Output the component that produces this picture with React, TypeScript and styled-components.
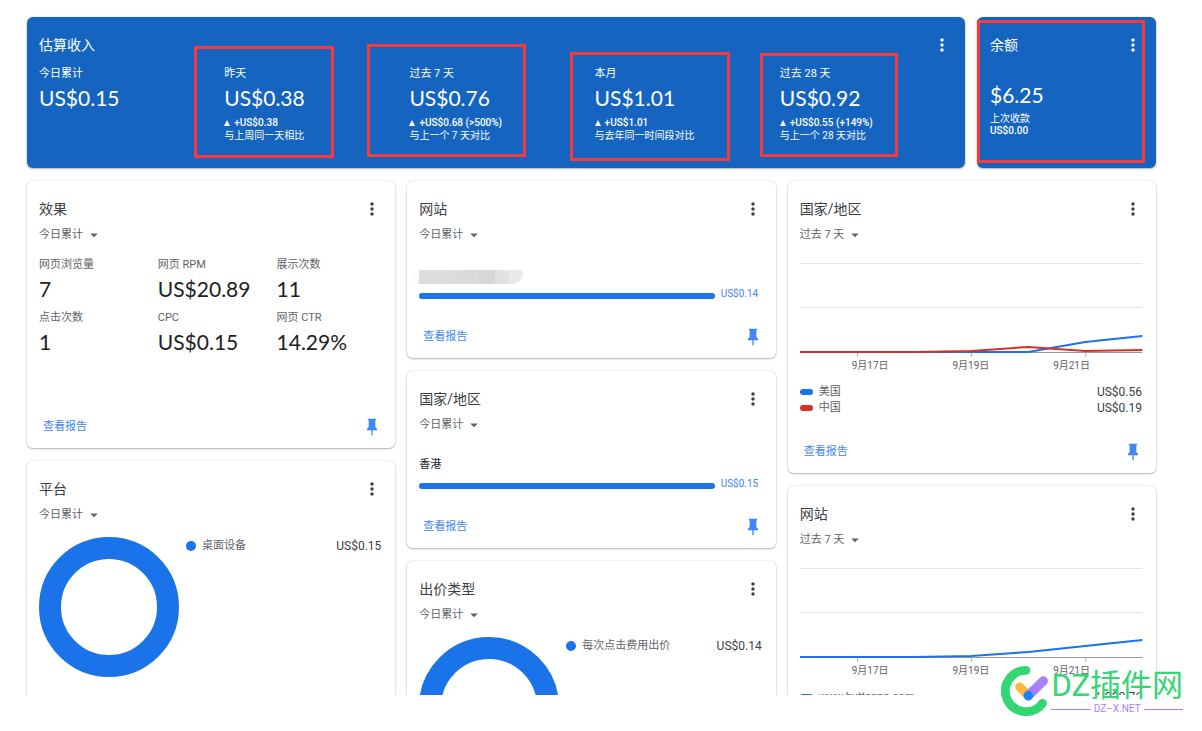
import React from "react";
import styled, { createGlobalStyle, css } from "styled-components";
import { MdMoreVert, MdArrowDropDown } from "react-icons/md";

const GlobalStyle = createGlobalStyle`
  *, *::before, *::after { box-sizing: border-box; }
  body {
    margin: 0;
    background: #fff;
    color: #202124;
    font-family: Roboto, "Noto Sans CJK SC", sans-serif;
    font-size: 11px;
    line-height: 16px;
  }
  h2, p, dl, dd, ul { margin: 0; padding: 0; }
  ul { list-style: none; }
  button, select { font: inherit; }
`;

const BLUE = "#1a73e8";
const RED = "#d93025";

const Page = styled.div`
  position: relative;
  height: 100vh;
  display: flex;
  flex-direction: column;
  padding-bottom: 36px;
`;

const Board = styled.main`
  flex: 1;
  min-height: 0;
  overflow: hidden;
  padding: 17px 46px 0 27px;
  display: flex;
  flex-direction: column;
  gap: 13px;
`;

const TopRow = styled.div`
  flex: none;
  display: flex;
  gap: 12px;
`;

const Columns = styled.div`
  flex: none;
  display: grid;
  grid-template-columns: repeat(3, minmax(0, 1fr));
  gap: 12px;
`;

const Column = styled.div`
  display: flex;
  flex-direction: column;
  gap: 13px;
`;

const Card = styled.section<{ $tone?: "blue" }>`
  position: relative;
  display: flex;
  flex-direction: column;
  padding: 18px 0 13px 12px;
  border-radius: 6px;
  background: #fff;
  box-shadow: 0 1px 2px rgba(60, 64, 67, 0.36), 0 0 2px rgba(60, 64, 67, 0.18);
  ${(p) =>
    p.$tone === "blue" &&
    css`
      background: #1565c0;
      color: #fff;
      padding-bottom: 26px;
    `}
`;

const Earnings = styled(Card)`
  flex: 1;
`;

const Balance = styled(Card)`
  flex: none;
  width: 179px;
  padding-left: 13px;
`;

const CardHead = styled.header`
  display: flex;
  align-items: center;
  justify-content: space-between;
  height: 20px;
  padding-right: 13px;
`;

const Title = styled.h2<{ $light?: boolean }>`
  font-size: 14px;
  line-height: 20px;
  font-weight: 400;
  color: ${(p) => (p.$light ? "#fff" : "#3c4043")};
`;

const IconButton = styled.button<{ $color: string }>`
  display: flex;
  padding: 0;
  border: 0;
  background: none;
  color: ${(p) => p.$color};
  cursor: pointer;
`;

const Stats = styled.div`
  display: grid;
  grid-template-columns: repeat(5, minmax(0, 1fr));
  margin-top: 11px;
`;

const Stat = styled.div`
  position: relative;
`;

const StatLabel = styled.p<{ $muted?: boolean }>`
  font-size: 11px;
  line-height: 16px;
  color: ${(p) => (p.$muted ? "#5f6368" : "inherit")};
`;

const Amount = styled.p<{ $tight?: boolean }>`
  margin: 4px 0 ${(p) => (p.$tight ? 5 : 7)}px;
  font-family: Lato, Roboto, sans-serif;
  font-size: 21px;
  line-height: 24px;
`;

const Trend = styled.p`
  display: flex;
  align-items: center;
  gap: 4px;
  font-size: 10px;
  line-height: 12px;
  font-weight: 500;
`;

const UpMark = styled.svg`
  width: 6px;
  height: 6px;
  fill: currentColor;
`;

const Note = styled.p`
  font-size: 10px;
  line-height: 13px;
`;

const BalanceBody = styled.div`
  margin-top: 24px;
`;

const Highlight = styled.span<{ $x: number; $y: number; $w: number; $h: number }>`
  position: absolute;
  left: ${(p) => p.$x}px;
  top: ${(p) => p.$y}px;
  width: ${(p) => p.$w}px;
  height: ${(p) => p.$h}px;
  border: 3px solid #f93a3a;
  pointer-events: none;
`;

const RangeField = styled.label`
  display: flex;
  align-items: center;
  align-self: flex-start;
  gap: 2px;
  height: 16px;
  margin-top: 8px;
  color: #5f6368;
`;

const RangeSelect = styled.select`
  appearance: none;
  field-sizing: content;
  padding: 0;
  border: 0;
  background: none;
  color: inherit;
  font-size: 11px;
  line-height: 16px;
`;

const Foot = styled.footer`
  display: flex;
  align-items: center;
  justify-content: space-between;
  height: 16px;
  margin-top: auto;
  padding: 0 13px 0 4px;
`;

const ReportLink = styled.a`
  color: #4285f4;
  text-decoration: none;
`;

const MetricCard = styled(Card)`
  height: 267px;
`;

const BarCard = styled(Card)`
  height: 177px;
`;

const ChartCard = styled(Card)`
  height: 292px;
`;

const DonutCard = styled(Card)`
  height: 267px;
`;

const Metrics = styled.div`
  display: grid;
  grid-template-columns: repeat(3, minmax(0, 1fr));
  row-gap: 2px;
  margin-top: 14px;
`;

const BarItem = styled.div`
  margin-top: 24px;
`;

const BarName = styled.p`
  height: 16px;
  display: flex;
  align-items: center;
  font-size: 11px;
`;

const Redacted = styled.span`
  width: 104px;
  height: 14px;
  margin-top: 4px;
  border-radius: 0 4px 14px 0;
  box-shadow: -8px 0 0 -1px #fbfbfb;
  background: linear-gradient(
    90deg,
    #dddddd 0 17%,
    #dfdcdf 17% 30%,
    #d9dcda 30% 44%,
    #dadada 44% 58%,
    #d7d7d6 58% 73%,
    #e2e2e0 73% 87%,
    #e8e9eb 87%
  );
`;

const BarLine = styled.div`
  display: flex;
  align-items: center;
  gap: 6px;
  margin-top: 5px;
  padding-right: 17px;
`;

const BarTrack = styled.span`
  flex: 1;
  height: 6px;
  margin-top: 3px;
  border-radius: 3px;
  background: ${BLUE};
`;

const BarValue = styled.span`
  font-size: 10px;
  line-height: 12px;
  min-width: 38px;
  color: #4285f4;
`;

const DonutBody = styled.div`
  display: flex;
  align-items: flex-start;
  gap: 7px;
  margin-top: 14px;
  padding-right: 14px;
`;

const DonutArt = styled.svg`
  flex: none;
  width: 140px;
  height: 140px;
`;

const Legend = styled.ul`
  flex: 1;
`;

const DonutLegend = styled(Legend)`
  padding-top: 1px;
`;

const LegendRow = styled.li`
  display: flex;
  align-items: center;
  gap: 6px;
  height: 16px;
`;

const Swatch = styled.span<{ $color: string; $round?: boolean }>`
  width: ${(p) => (p.$round ? 10 : 13)}px;
  height: ${(p) => (p.$round ? 10 : 6)}px;
  border-radius: 5px;
  background: ${(p) => p.$color};
`;

const LegendName = styled.span`
  flex: 1;
  color: #5f6368;
`;

const LegendValue = styled.span`
  font-size: 12px;
  color: #3c4043;
`;

const ChartBody = styled.div`
  margin-top: 19px;
  padding-right: 14px;
`;

const ChartArt = styled.svg`
  display: block;
  width: 100%;
  height: 98px;
  overflow: visible;
`;

const AxisLabels = styled.div`
  display: flex;
  justify-content: space-between;
  padding: 0 52px;
  font-size: 10px;
  line-height: 12px;
  color: #5f6368;
`;

const ChartLegend = styled(Legend)`
  margin-top: 12px;
`;

const Watermark = styled.div`
  position: absolute;
  right: 19px;
  bottom: 15px;
  display: flex;
  align-items: center;
  gap: 2px;
`;

const Mark = styled.svg`
  width: 48px;
  height: 50px;
`;

const Brand = styled.div`
  display: flex;
  flex-direction: column;
`;

const BrandName = styled.span`
  font-size: 31px;
  line-height: 36px;
  color: #34d673;
`;

const BrandSite = styled.span`
  display: flex;
  align-items: center;
  gap: 3px;
  font-size: 10px;
  line-height: 10px;
  color: #a67fff;
  &::before,
  &::after {
    content: "";
    flex: 1;
    height: 1px;
    background: currentColor;
  }
`;

function More({ light }: { light?: boolean }) {
  return (
    <IconButton $color={light ? "#fff" : "#3c4043"} aria-label="更多">
      <MdMoreVert size={20} />
    </IconButton>
  );
}

function Head({ title, light }: { title: string; light?: boolean }) {
  return (
    <CardHead>
      <Title $light={light}>{title}</Title>
      <More light={light} />
    </CardHead>
  );
}

const RANGES = ["今日累计", "过去 7 天"];

function Range({ value }: { value: string }) {
  return (
    <RangeField>
      <RangeSelect defaultValue={value} aria-label="日期范围">
        {RANGES.map((r) => (
          <option key={r}>{r}</option>
        ))}
      </RangeSelect>
      <MdArrowDropDown size={18} />
    </RangeField>
  );
}

function ReportFoot() {
  return (
    <Foot>
      <ReportLink href="#report">查看报告</ReportLink>
      <IconButton $color="#4285f4" aria-label="固定">
        <svg width="20" height="20" viewBox="0 0 24 24" fill="currentColor">
          <path d="M16 12V4H17V2H7V4H8V12L6 14V16H11.2V22H12.8V16H18V14L16 12Z" />
        </svg>
      </IconButton>
    </Foot>
  );
}

type Box = { x: number; y: number; w: number; h: number };

const EARNINGS: { label: string; value: string; trend?: string; note?: string; box?: Box }[] = [
  { label: "今日累计", value: "US$0.15" },
  { label: "昨天", value: "US$0.38", trend: "+US$0.38", note: "与上周同一天相比", box: { x: -30, y: -20, w: 140, h: 112 } },
  { label: "过去 7 天", value: "US$0.76", trend: "+US$0.68 (>500%)", note: "与上一个 7 天对比", box: { x: -42, y: -22, w: 159, h: 113 } },
  { label: "本月", value: "US$1.01", trend: "+US$1.01", note: "与去年同一时间段对比", box: { x: -25, y: -14, w: 160, h: 109 } },
  { label: "过去 28 天", value: "US$0.92", trend: "+US$0.55 (+149%)", note: "与上一个 28 天对比", box: { x: -20, y: -13, w: 138, h: 104 } },
];

const METRICS = [
  ["网页浏览量", "7"],
  ["网页 RPM", "US$20.89"],
  ["展示次数", "11"],
  ["点击次数", "1"],
  ["CPC", "US$0.15"],
  ["网页 CTR", "14.29%"],
];

function BarReport({ title, name, value }: { title: string; name?: string; value: string }) {
  return (
    <BarCard>
      <Head title={title} />
      <Range value="今日累计" />
      <BarItem>
        <BarName>{name ?? <Redacted />}</BarName>
        <BarLine>
          <BarTrack />
          <BarValue>{value}</BarValue>
        </BarLine>
      </BarItem>
      <ReportFoot />
    </BarCard>
  );
}

function DonutReport({ title, name, value }: { title: string; name: string; value: string }) {
  return (
    <DonutCard>
      <Head title={title} />
      <Range value="今日累计" />
      <DonutBody>
        <DonutArt viewBox="0 0 140 140">
          <circle cx="70" cy="70" r="59" fill="none" stroke={BLUE} strokeWidth="22" />
        </DonutArt>
        <DonutLegend>
          <LegendRow>
            <Swatch $color={BLUE} $round />
            <LegendName>{name}</LegendName>
            <LegendValue>{value}</LegendValue>
          </LegendRow>
        </DonutLegend>
      </DonutBody>
    </DonutCard>
  );
}

type Series = { name: string; value: string; color: string; points: number[] };

function ChartReport({ title, series, footer }: { title: string; series: Series[]; footer?: boolean }) {
  return (
    <ChartCard>
      <Head title={title} />
      <Range value="过去 7 天" />
      <ChartBody>
        <ChartArt viewBox="0 0 342 98" preserveAspectRatio="none">
          <path d="M0 1.5H342M0 45.5H342" stroke="#e4e4e4" />
          <path d="M0 90.5H342" stroke="#9a9a9a" />
          <path d="M57.5 91V95M171.5 91V95M285.5 91V95" stroke="#b0b0b0" />
          {series.map((s) => (
            <polyline
              key={s.name}
              fill="none"
              stroke={s.color}
              strokeWidth="2"
              points={s.points.map((y, i) => `${i * 57},${90 - y}`).join(" ")}
            />
          ))}
        </ChartArt>
        <AxisLabels>
          <span>9月17日</span>
          <span>9月19日</span>
          <span>9月21日</span>
        </AxisLabels>
        <ChartLegend>
          {series.map((s) => (
            <LegendRow key={s.name}>
              <Swatch $color={s.color} />
              <LegendName>{s.name}</LegendName>
              <LegendValue>{s.value}</LegendValue>
            </LegendRow>
          ))}
        </ChartLegend>
      </ChartBody>
      {footer && <ReportFoot />}
    </ChartCard>
  );
}

export default function App() {
  return (
    <>
      <GlobalStyle />
      <Page>
        <Board>
          <TopRow>
            <Earnings $tone="blue">
              <Head title="估算收入" light />
              <Stats>
                {EARNINGS.map((s) => (
                  <Stat key={s.label}>
                    <StatLabel>{s.label}</StatLabel>
                    <Amount>{s.value}</Amount>
                    {s.trend && (
                      <Trend>
                        <UpMark viewBox="0 0 6 6">
                          <path d="M3 0L6 6H0Z" />
                        </UpMark>
                        {s.trend}
                      </Trend>
                    )}
                    {s.note && <Note>{s.note}</Note>}
                    {s.box && <Highlight $x={s.box.x} $y={s.box.y} $w={s.box.w} $h={s.box.h} />}
                  </Stat>
                ))}
              </Stats>
            </Earnings>
            <Balance $tone="blue">
              <Head title="余额" light />
              <BalanceBody>
                <Amount $tight>$6.25</Amount>
                <Note>上次收款</Note>
                <Trend>US$0.00</Trend>
              </BalanceBody>
              <Highlight $x={0} $y={3} $w={168} $h={143} />
            </Balance>
          </TopRow>
          <Columns>
            <Column>
              <MetricCard>
                <Head title="效果" />
                <Range value="今日累计" />
                <Metrics>
                  {METRICS.map(([label, value]) => (
                    <div key={label}>
                      <StatLabel $muted>{label}</StatLabel>
                      <Amount>{value}</Amount>
                    </div>
                  ))}
                </Metrics>
                <ReportFoot />
              </MetricCard>
              <DonutReport title="平台" name="桌面设备" value="US$0.15" />
            </Column>
            <Column>
              <BarReport title="网站" value="US$0.14" />
              <BarReport title="国家/地区" name="香港" value="US$0.15" />
              <DonutReport title="出价类型" name="每次点击费用出价" value="US$0.14" />
            </Column>
            <Column>
              <ChartReport
                title="国家/地区"
                footer
                series={[
                  { name: "美国", value: "US$0.56", color: BLUE, points: [0, 0, 0, 0, 0, 10, 16] },
                  { name: "中国", value: "US$0.19", color: RED, points: [0, 0, 0, 1, 5, 1, 2] },
                ]}
              />
              <ChartReport
                title="网站"
                series={[
                  { name: "www.buttonpp.com", value: "US$0.76", color: BLUE, points: [0, 0, 0, 1, 5, 11, 17] },
                ]}
              />
            </Column>
          </Columns>
        </Board>
        <Watermark>
          <Mark viewBox="0 0 48 50">
            <path d="M25 4.4A20.6 20.6 0 1 0 41.5 37.3" fill="none" stroke="#34d673" strokeWidth="8.8" strokeLinecap="round" />
            <path d="M18.7 21L27.3 29.7" stroke="#ffb83d" strokeWidth="9" strokeLinecap="round" />
            <path d="M27.3 29.7L42.3 15" stroke="#a67fff" strokeWidth="9.4" strokeLinecap="round" />
            <circle cx="27.3" cy="29.7" r="4.7" fill="#1684fc" />
          </Mark>
          <Brand>
            <BrandName>DZ插件网</BrandName>
            <BrandSite>DZ–X.NET</BrandSite>
          </Brand>
        </Watermark>
      </Page>
    </>
  );
}
